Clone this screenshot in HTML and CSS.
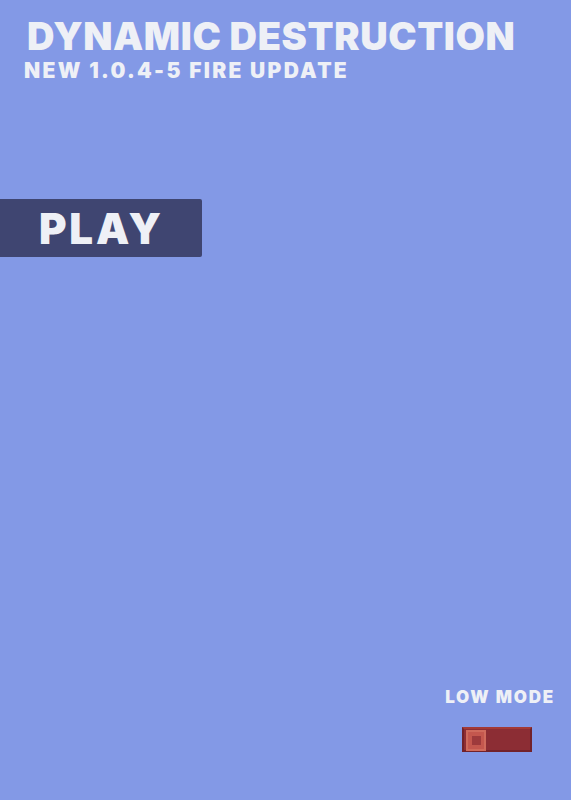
FILE: index.html
```html
<!DOCTYPE html>
<html lang="en">
<head>
    <meta charset="UTF-8">
    <meta name="viewport" content="width=device-width, initial-scale=1.0">
    <title>Dynamic Destruction</title>
    <link rel="stylesheet" href="styles.css">
</head>
<body>
    <div class="menu">
        <div class="header">
            <h1 class="title">DYNAMIC DESTRUCTION</h1>
            <p class="version">NEW 1.0.4-5 FIRE UPDATE</p>
        </div>

        <button class="play">PLAY</button>

        <div class="settings">
            <p class="setting-label">LOW MODE</p>
            <div class="toggle">
                <span class="knob"></span>
            </div>
        </div>
    </div>
</body>
</html>
```

FILE: styles.css
```css
body {
    margin: 0;
    background-color: #8399e6;
    font-family: Inter, "DejaVu Sans", sans-serif;
    color: #eef0f6;
}

.menu {
    height: 800px;
    display: flex;
    flex-direction: column;
}

.header {
    padding: 14px 0 0 24px;
}

.title {
    margin: 0 0 0 3px;
    font-size: 38px;
    font-weight: 900;
    line-height: 44px;
    letter-spacing: 0.6px;
}

.version {
    margin: 0;
    font-size: 21px;
    font-weight: 900;
    line-height: 26px;
    letter-spacing: 2.3px;
}

.play {
    margin-top: 115px;
    width: 202px;
    height: 58px;
    padding: 0 0 0 39px;
    text-align: left;
    border: none;
    border-radius: 0 2px 2px 0;
    background-color: #3f4571;
    color: #eef0f6;
    font-family: inherit;
    font-size: 42px;
    font-weight: 900;
    letter-spacing: 2.8px;
}

.settings {
    margin-top: auto;
    margin-bottom: 48px;
    align-self: flex-end;
    padding-right: 16px;
    display: flex;
    flex-direction: column;
    align-items: flex-start;
}

.setting-label {
    margin: 0 0 20px;
    font-size: 17px;
    font-weight: 900;
    letter-spacing: 1.8px;
}

/* switch sits a bit in from the label's left edge */
.toggle {
    width: 70px;
    height: 25px;
    box-sizing: border-box;
    background-color: #8c2d34;
    border: 2px solid #72222a;
    border-top-color: #a33a36;
    padding: 1px 2px;
    display: flex;
    margin-left: 17px;
}

.knob {
    width: 16px;
    height: 17px;
    background-color: #c4574e;
    border: 2px solid #cf6a5c;
    display: flex;
    align-items: center;
    justify-content: center;
}

.knob::after {
    content: "";
    width: 9px;
    height: 9px;
    background-color: #9e3a3c;
}
```
